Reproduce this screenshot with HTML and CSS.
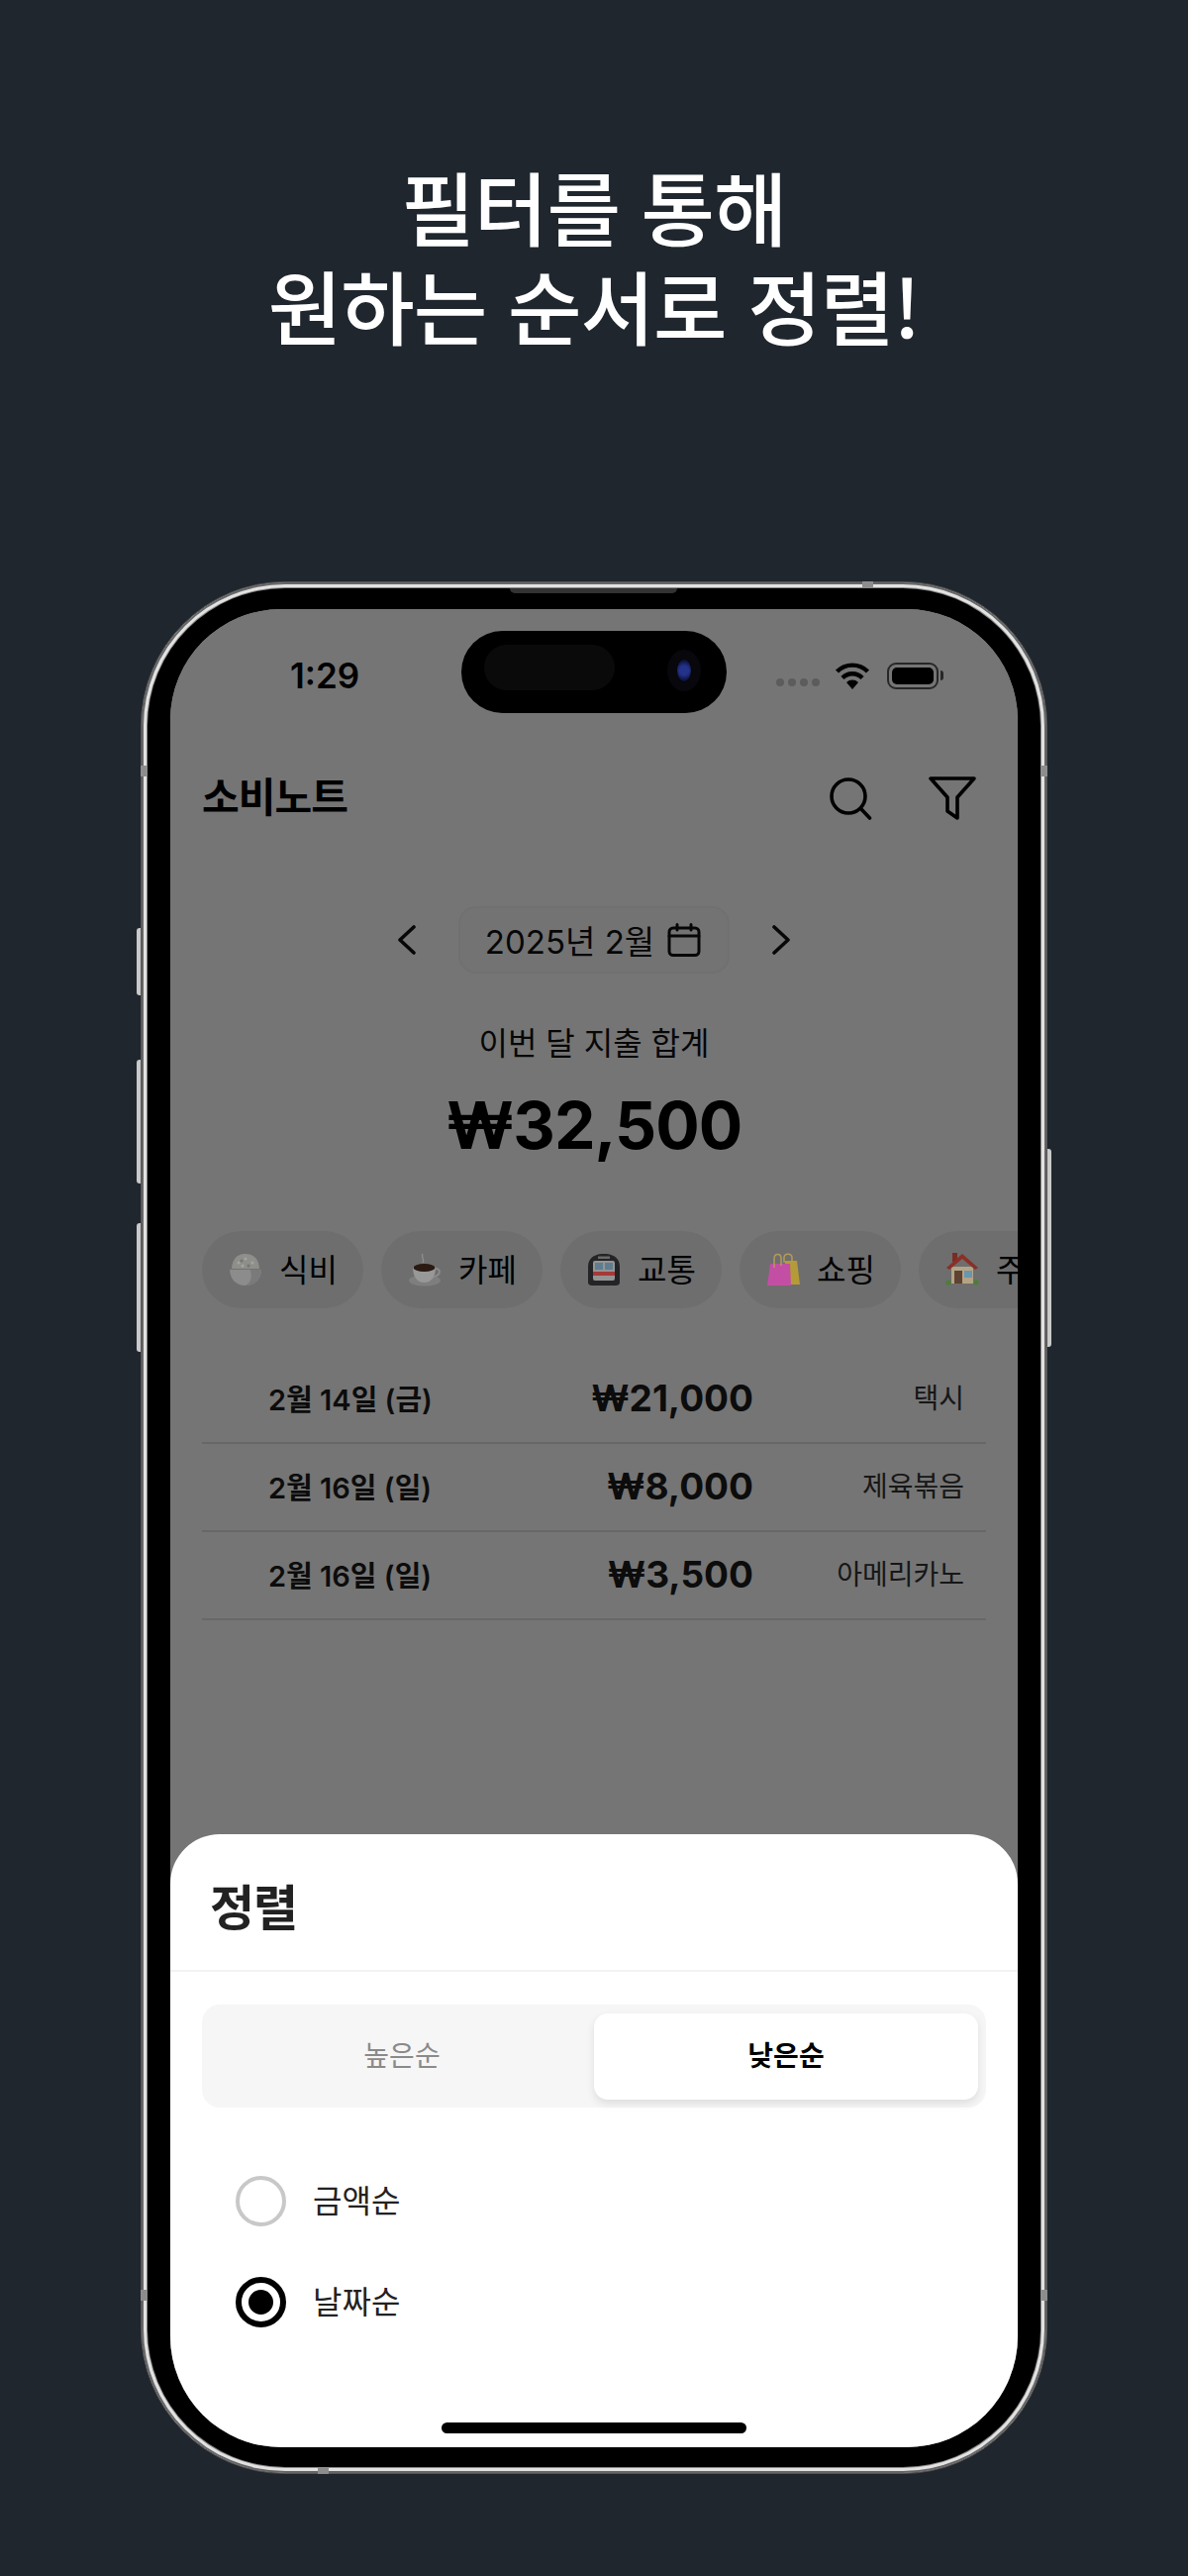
FILE: index.html
```html
<!DOCTYPE html>
<html lang="ko">
<head>
    <meta charset="UTF-8">
    <meta name="viewport" content="width=device-width, initial-scale=1.0">
    <title>소비노트</title>
    <link rel="stylesheet" href="styles.css">
</head>
<body>
    <h1 class="headline">필터를 통해<br>원하는 순서로 정렬!</h1>

    <div class="phone">
        <span class="side-btn mute"></span>
        <span class="side-btn vol-up"></span>
        <span class="side-btn vol-down"></span>
        <span class="side-btn power"></span>
        <span class="speaker"></span>
        <span class="band band-top"></span>
        <span class="band band-bottom"></span>
        <span class="band band-left-a"></span>
        <span class="band band-left-b"></span>
        <span class="band band-right-a"></span>
        <span class="band band-right-b"></span>

        <div class="screen">
            <div class="status-bar">
                <span class="time">1:29</span>
                <div class="status-icons">
                    <span class="signal"><i></i><i></i><i></i><i></i></span>
                    <svg class="wifi" width="36" height="27" viewBox="0 0 36 27">
                        <path d="M18 27 L12 20 A8.5 8.5 0 0 1 24 20 Z" fill="#000"/>
                        <path d="M8 15.5 A14 14 0 0 1 28 15.5" fill="none" stroke="#000" stroke-width="4.4"/>
                        <path d="M2.5 9 A22 22 0 0 1 33.500 9" fill="none" stroke="#000" stroke-width="4.4"/>
                    </svg>
                    <span class="battery"><i></i></span>
                </div>
            </div>

            <header class="app-bar">
                <span class="app-title">소비노트</span>
                <div class="app-actions">
                    <svg width="44" height="44" viewBox="0 0 44 44" fill="none" stroke="#000" stroke-width="3.6" stroke-linecap="round">
                        <circle cx="20" cy="20" r="17"/>
                        <path d="M33 33 L41.500 42"/>
                    </svg>
                    <svg width="48" height="44" viewBox="0 0 48 44" fill="none" stroke="#000" stroke-width="3.6" stroke-linejoin="round">
                        <path d="M2 2 H46 L29 21 V42 L19 35 V21 Z"/>
                    </svg>
                </div>
            </header>

            <div class="month-nav">
                <svg width="20" height="30" viewBox="0 0 20 30" fill="none" stroke="#111" stroke-width="3.6" stroke-linecap="round" stroke-linejoin="round">
                    <path d="M17 2 L3 15 L17 28"/>
                </svg>
                <div class="month-chip">
                    <span>2025년 2월</span>
                    <svg width="34" height="34" viewBox="0 0 34 34" fill="none" stroke="#111" stroke-width="3" stroke-linecap="round">
                        <rect x="2" y="5" width="30" height="27.5" rx="4"/>
                        <path d="M2 13 H32 M10 1.5 V7 M24 1.5 V7"/>
                    </svg>
                </div>
                <svg width="20" height="30" viewBox="0 0 20 30" fill="none" stroke="#111" stroke-width="3.6" stroke-linecap="round" stroke-linejoin="round">
                    <path d="M3 2 L17 15 L3 28"/>
                </svg>
            </div>

            <div class="summary">
                <p class="summary-label">이번 달 지출 합계</p>
                <p class="summary-total">₩32,500</p>
            </div>

            <div class="chips">
                <div class="chip">
                    <svg width="34" height="34" viewBox="0 0 34 34">
                        <path d="M1 16 C1 27 8 33 17 33 C26 33 33 27 33 16 Z" fill="#8c8c8c"/>
                        <path d="M22 17 H33 C33 26 27 33 17 33 C24 30 23 22 22 17 Z" fill="#7a7a7a"/>
                        <path d="M3 17 C3 6 9 1 17 1 C25 1 31 6 31 17 Z" fill="#8e8e8a"/>
                        <path d="M1 16 H33 V17 H1 Z" fill="#727272"/>
                        <circle cx="10" cy="10" r="1.500" fill="#a4a4a0"/><circle cx="17" cy="6" r="1.500" fill="#a4a4a0"/>
                        <circle cx="24" cy="10" r="1.500" fill="#a4a4a0"/><circle cx="14" cy="13" r="1.500" fill="#a4a4a0"/>
                        <circle cx="20" cy="13" r="1.500" fill="#747470"/><circle cx="13" cy="8" r="1.500" fill="#747470"/>
                    </svg>
                    <span>식비</span>
                </div>
                <div class="chip">
                    <svg width="34" height="34" viewBox="0 0 34 34">
                        <ellipse cx="17" cy="28" rx="16" ry="5.500" fill="#7e7e7e"/>
                        <path d="M5 14 H28 C28 24 24 30 16.500 30 C9 30 5 24 5 14 Z" fill="#989898"/>
                        <path d="M28 16 C34 16 33 23 26 24" fill="none" stroke="#8a8a8a" stroke-width="2"/>
                        <ellipse cx="16.500" cy="15" rx="11" ry="4" fill="#2a1a12"/>
                        <path d="M15 1 C13 4 17 6 15 10" fill="none" stroke="#8c8c8c" stroke-width="1.500"/>
                    </svg>
                    <span>카페</span>
                </div>
                <div class="chip">
                    <svg width="34" height="34" viewBox="0 0 34 34">
                        <path d="M1 30 V14 C1 5 8 1 17 1 C26 1 33 5 33 14 V30 C33 32 31 33 29 33 H5 C3 33 1 32 1 30 Z" fill="#242426"/>
                        <rect x="6" y="8" width="22" height="20" rx="2" fill="#949494"/>
                        <rect x="8" y="10" width="8" height="7" fill="#5f7d90"/><rect x="18" y="10" width="8" height="7" fill="#5f7d90"/>
                        <rect x="6" y="19" width="22" height="4" fill="#a63a38"/>
                        <rect x="11" y="3.500" width="12" height="2.500" fill="#6a6a6a"/>
                    </svg>
                    <span>교통</span>
                </div>
                <div class="chip">
                    <svg width="34" height="34" viewBox="0 0 34 34">
                        <path d="M19 8 H31 L34 32 H19 Z" fill="#b59a38"/>
                        <path d="M4 11 H24 L25 33 H1 Z" fill="#c24fa4"/>
                        <path d="M8 15 V6 C8 0 15 0 15 6 V13 M18 10 V5 C18 0 26 0 26 5 V10" fill="none" stroke="#b59a58" stroke-width="1.500"/>
                    </svg>
                    <span>쇼핑</span>
                </div>
                <div class="chip">
                    <svg width="34" height="34" viewBox="0 0 34 34">
                        <rect x="7" y="0" width="5" height="9" fill="#7a2c24"/>
                        <rect x="6" y="14" width="22" height="17" fill="#b4a486"/>
                        <path d="M17 1 L33 15 L30 17 L17 6 L4 17 L1 15 Z" fill="#8a3028"/>
                        <rect x="9" y="18" width="8" height="13" fill="#5e4232"/>
                        <rect x="19" y="18" width="8" height="7" fill="#6a96ae"/>
                        <circle cx="3" cy="30" r="2.500" fill="#4a8030"/><circle cx="31" cy="30" r="2.500" fill="#4a8030"/>
                    </svg>
                    <span>주거</span>
                </div>
            </div>

            <ul class="expense-list">
                <li class="expense-row">
                    <span class="expense-date">2월 14일 (금)</span>
                    <span class="expense-amount">₩21,000</span>
                    <span class="expense-note">택시</span>
                </li>
                <li class="expense-row">
                    <span class="expense-date">2월 16일 (일)</span>
                    <span class="expense-amount">₩8,000</span>
                    <span class="expense-note">제육볶음</span>
                </li>
                <li class="expense-row">
                    <span class="expense-date">2월 16일 (일)</span>
                    <span class="expense-amount">₩3,500</span>
                    <span class="expense-note">아메리카노</span>
                </li>
            </ul>

            <div class="scrim"></div>

            <div class="island">
                <span class="island-sensor"></span>
                <span class="island-camera"></span>
            </div>

            <section class="sheet">
                <h2 class="sheet-title">정렬</h2>
                <div class="sheet-body">
                    <div class="segment">
                        <button class="segment-btn" type="button">높은순</button>
                        <button class="segment-btn active" type="button">낮은순</button>
                    </div>
                    <div class="radio-group">
                        <div class="radio-row"><span class="radio"></span><span class="radio-label">금액순</span></div>
                        <div class="radio-row"><span class="radio checked"></span><span class="radio-label">날짜순</span></div>
                    </div>
                </div>
                <span class="home-bar"></span>
            </section>
        </div>
    </div>
</body>
</html>
```

FILE: styles.css
```css
/* General Page Styling */
* {
    box-sizing: border-box;
}

body {
    margin: 0;
    height: 2601px;
    overflow: hidden;
    background-color: #1f262e;
    font-family: Inter, "Noto Sans CJK KR", sans-serif;
    color: #000;
    display: flex;
    flex-direction: column;
    align-items: center;
}

.headline {
    margin: 157px 0 0;
    height: 430px;
    font-family: "Noto Sans CJK KR", sans-serif;
    font-size: 81px;
    line-height: 100px;
    font-weight: 500;
    letter-spacing: -1px;
    text-align: center;
    color: #fff;
}

/* Phone Frame */
.phone {
    position: relative;
    flex: none;
    width: 916px;
    height: 1911px;
    padding: 27px 29px 26px 29px;
    border-radius: 146px;
    background-color: #000;
    border: 1px solid #555;
    box-shadow: inset 0 0 0 2px #666, inset 0 0 0 5px #e2e2e2, inset 0 0 0 6px #888;
}

.side-btn {
    position: absolute;
    left: -5px;
    width: 4px;
    background-color: #c9c9c9;
    border-radius: 3px 0 0 3px;
}

.mute { top: 349px; height: 68px; }
.vol-up { top: 482px; height: 125px; }
.vol-down { top: 647px; height: 130px; }

.power {
    left: auto;
    right: -5px;
    top: 572px;
    height: 200px;
    border-radius: 0 3px 3px 0;
}

.speaker {
    position: absolute;
    top: 6px;
    left: 372px;
    width: 169px;
    height: 5px;
    background-color: #333;
    border-radius: 0 0 6px 6px;
}

/* Antenna bands on the frame */
.band {
    position: absolute;
    background-color: #8d8d8d;
}

.band-top { top: -1px; left: 728px; width: 11px; height: 7px; }
.band-bottom { bottom: -1px; left: 178px; width: 11px; height: 7px; }
.band-left-a { left: -1px; top: 185px; width: 7px; height: 11px; }
.band-left-b { left: -1px; top: 1724px; width: 7px; height: 11px; }
.band-right-a { right: -1px; top: 185px; width: 7px; height: 11px; }
.band-right-b { right: -1px; top: 1724px; width: 7px; height: 11px; }

.screen {
    position: relative;
    height: 100%;
    overflow: hidden;
    background-color: #fff;
    border-radius: 112px;
    padding: 0 32px;
}

/* Status Bar */
.status-bar {
    display: flex;
    justify-content: space-between;
    align-items: center;
    height: 40px;
    margin-top: 47px;
    padding: 0 48px 0 89px;
}

.time {
    font-size: 35px;
    font-weight: 600;
}

.status-icons {
    display: flex;
    align-items: center;
    gap: 15px;
}

.signal {
    display: flex;
    gap: 4px;
    margin-top: 14px;
}

.signal i {
    width: 8px;
    height: 8px;
    border-radius: 4px;
    background-color: #c8c8c8;
}

.wifi {
    margin-right: 2px;
}

.battery {
    position: relative;
    width: 52px;
    height: 27px;
    padding: 3px;
    border: 2px solid #555;
    border-radius: 9px;
}

.battery i {
    display: block;
    height: 100%;
    background-color: #000;
    border-radius: 5px;
}

.battery::after {
    content: "";
    position: absolute;
    right: -7px;
    top: 6px;
    width: 3px;
    height: 10px;
    background-color: #555;
    border-radius: 0 3px 3px 0;
}

/* App Bar */
.app-bar {
    display: flex;
    justify-content: space-between;
    align-items: center;
    height: 44px;
    margin-top: 82px;
    padding-right: 10px;
}

.app-title {
    margin-bottom: 8px;
    font-family: "Noto Sans CJK KR", sans-serif;
    font-size: 41px;
    font-weight: 700;
    letter-spacing: -1px;
}

.app-actions {
    display: flex;
    gap: 57px;
    align-items: center;
}

/* Month Navigation */
.month-nav {
    display: flex;
    justify-content: center;
    align-items: center;
    gap: 42px;
    margin-top: 87px;
}

.month-chip {
    display: flex;
    align-items: center;
    gap: 13px;
    height: 68px;
    padding: 0 27px 0 25px;
    border-radius: 18px;
    border: 2px solid #f4f4f4;
    background-color: #fbfbfb;
    font-size: 33px;
    color: #111;
}

/* Monthly Summary */
.summary {
    margin-top: 48px;
    text-align: center;
}

.summary-label {
    margin: 0;
    font-family: "Noto Sans CJK KR", sans-serif;
    font-size: 32px;
    line-height: 40px;
    color: #111;
}

.summary-total {
    margin: 25px 0 0;
    font-size: 66px;
    line-height: 80px;
    font-weight: 700;
    letter-spacing: -1px;
}

/* Category Chips */
.chips {
    display: flex;
    gap: 18px;
    margin-top: 67px;
    margin-right: -120px;
}

.chip {
    display: flex;
    align-items: center;
    gap: 17px;
    flex: none;
    width: 163px;
    height: 78px;
    padding-left: 27px;
    border-radius: 39px;
    background-color: #f0f0f0;
    font-family: "Noto Sans CJK KR", sans-serif;
    font-size: 32px;
}

.chip span {
    margin-bottom: 5px;
}

/* emoji stay brighter than the dim layer */
.chip svg {
    position: relative;
    z-index: 2;
    flex: none;
}

/* Expense List */
.expense-list {
    list-style: none;
    margin: 48px 0 0;
    padding: 0;
}

.expense-row {
    display: flex;
    align-items: center;
    height: 89px;
    padding: 0 22px 3px 67px;
    border-bottom: 2px solid #e0e0e0;
}

.expense-date {
    width: 165px;
    font-size: 29px;
    font-weight: 600;
    color: #1c1c1c;
    white-space: nowrap;
}

.expense-amount {
    width: 325px;
    text-align: right;
    font-size: 37px;
    font-weight: 700;
    color: #1c1c1c;
}

.expense-note {
    flex: 1;
    margin-bottom: 2px;
    text-align: right;
    font-family: "Noto Sans CJK KR", sans-serif;
    font-size: 28px;
    color: #333;
}

/* Dim Layer + Dynamic Island */
.scrim {
    position: absolute;
    z-index: 1;
    inset: 0;
    background-color: rgba(0, 0, 0, 0.54);
}

.island {
    position: absolute;
    z-index: 3;
    top: 22px;
    left: 294px;
    width: 268px;
    height: 83px;
    border-radius: 42px;
    background-color: #000;
}

.island-sensor {
    position: absolute;
    left: 23px;
    top: 14px;
    width: 132px;
    height: 46px;
    border-radius: 23px;
    background-color: #0a0a0a;
}

.island-camera {
    position: absolute;
    left: 218px;
    top: 29px;
    width: 14px;
    height: 22px;
    border-radius: 50%;
    background: radial-gradient(circle, #24328a 0 35%, #10174a 70%, #0a0c24 100%);
    box-shadow: 0 0 0 10px #07070c;
}

/* Bottom Sheet */
.sheet {
    position: absolute;
    z-index: 3;
    left: 0;
    right: 0;
    bottom: 0;
    height: 619px;
    background-color: #fff;
    border-radius: 50px 50px 0 0;
}

.sheet-title {
    margin: 0;
    height: 139px;
    padding: 41px 0 0 40px;
    font-family: "Noto Sans CJK KR", sans-serif;
    font-size: 49px;
    line-height: 60px;
    font-weight: 700;
    letter-spacing: -1px;
    color: #222;
    border-bottom: 2px solid #f3f3f3;
}

.sheet-body {
    padding: 33px 32px 0;
}

.segment {
    display: flex;
    height: 104px;
    padding: 9px 8px 8px;
    border-radius: 18px;
    background-color: #f6f6f6;
}

.segment-btn {
    flex: 1;
    border: none;
    border-radius: 14px;
    background: none;
    padding: 0 0 6px;
    font-family: "Noto Sans CJK KR", sans-serif;
    font-size: 28px;
    color: #8a8a8a;
}

.segment-btn.active {
    background-color: #fff;
    box-shadow: 0 4px 8px rgba(0, 0, 0, 0.1);
    font-weight: 700;
    color: #000;
}

.radio-group {
    display: flex;
    flex-direction: column;
    gap: 51px;
    margin-top: 69px;
    padding-left: 34px;
}

.radio-row {
    display: flex;
    align-items: center;
    gap: 27px;
    height: 51px;
    font-family: "Noto Sans CJK KR", sans-serif;
    font-size: 32px;
    color: #222;
}

.radio-label {
    margin-bottom: 5px;
}

.radio {
    width: 51px;
    height: 51px;
    border-radius: 50%;
    border: 4px solid #c8c8c8;
}

.radio.checked {
    border: 6px solid #000;
    padding: 7px;
    background-color: #000;
    background-clip: content-box;
}

.home-bar {
    position: absolute;
    left: 274px;
    bottom: 14px;
    width: 308px;
    height: 11px;
    border-radius: 6px;
    background-color: #000;
}
```
